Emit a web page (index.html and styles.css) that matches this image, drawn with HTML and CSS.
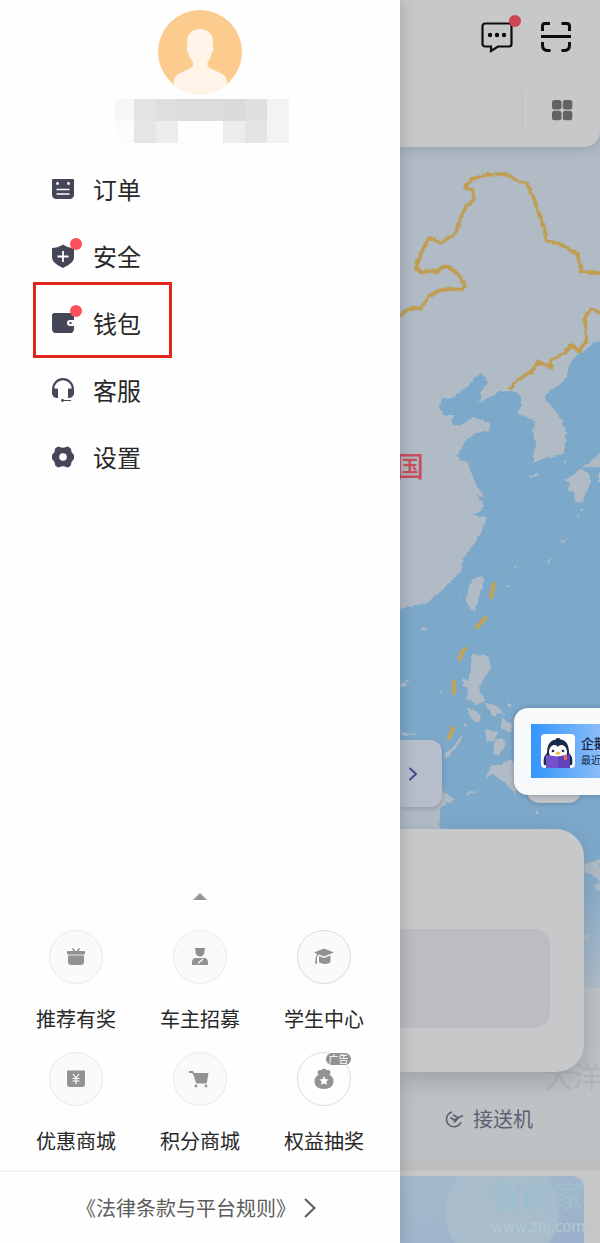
FILE: index.html
```html
<!DOCTYPE html>
<html lang="zh-CN">
<head>
<meta charset="utf-8">
<meta name="viewport" content="width=device-width, initial-scale=1">
<title>个人中心</title>
<link rel="stylesheet" href="styles.css">
</head>
<body>
<div class="screen">
  <aside class="drawer">
    <header class="profile">
      <svg class="avatar" viewBox="0 0 84 84" role="img" aria-label="头像">
        <defs><clipPath id="face"><circle cx="42" cy="42" r="42"/></clipPath></defs>
        <circle cx="42" cy="42" r="42" fill="#fccb8e"/>
        <path clip-path="url(#face)" fill="#fff4e7" d="M42 19c8 0 13 5 13 12l-.300 5c2 0 1 6-1.200 7-.5 4-2 7-4 9v4c5 5 15 6 18 11 2 4 2 9 2 17H16c0-8-1-14 1-17 3-5 13-6 18-11v-4c-3-3-4-6-4.500-9-2-1-3-7-1-7L29 31c0-7 5-12 13-12z"/>
      </svg>
      <svg class="mosaic" viewBox="0 0 174 44" shape-rendering="crispEdges" aria-hidden="true">
        <path fill="#f7f7f7" d="M0 0h19v22H0z"/><path fill="#fcfcfc" d="M0 22h19v22H0z"/>
        <path fill="#e3e3e3" d="M19 0h22v22H19z"/><path fill="#e5e5e5" d="M19 22h22v22H19z"/>
        <path fill="#dedede" d="M41 0h22v22H41z"/><path fill="#ececec" d="M41 22h22v22H41z"/>
        <path fill="#dcdcdc" d="M63 0h45v22H63z"/><path fill="#fefefe" d="M63 22h45v22H63z"/>
        <path fill="#dadada" d="M108 0h22v22h-22z"/><path fill="#ececec" d="M108 22h22v22h-22z"/>
        <path fill="#dfdfdf" d="M130 0h22v22h-22z"/><path fill="#e4e4e4" d="M130 22h22v22h-22z"/>
        <path fill="#f3f3f3" d="M152 0h22v44h-22z"/>
      </svg>
    </header>

    <nav class="menu">
      <a class="item" href="#orders">
        <svg class="icon" viewBox="0 0 24 24"><path fill="#454658" d="M2 2h20a1 1 0 0 1 1 1v15c0 2-2 4-4 4H5c-2 0-4-2-4-4V3a1 1 0 0 1 1-1z"/><circle cx="6.500" cy="6.500" r="1.400" fill="#fff"/><circle cx="17.500" cy="6.500" r="1.400" fill="#fff"/><path d="M5.500 12.500h13M5.500 17h13" stroke="#fff" stroke-width="1.500"/></svg>
        <span>订单</span>
      </a>
      <a class="item" href="#safety">
        <svg class="icon" viewBox="0 0 24 24"><path fill="#454658" d="M12 .500 14.500 2C17 3.300 20 3.800 23 4v9c0 5-5 8-11 11C6 21 1 18 1 13V4c3-.2 6-.7 8.500-2z"/><path d="M12 7v11M6.500 12.500h11" stroke="#fff" stroke-width="1.800"/></svg>
        <i class="dot"></i>
        <span>安全</span>
      </a>
      <a class="item marked" href="#wallet">
        <svg class="icon" viewBox="0 0 24 24"><path fill="#454658" d="M3 2h18a2 2 0 0 1 2 2v5h-4a3 3 0 0 0 0 6h4v2c0 3-1 5-4 5H5c-3 0-4-2-4-5V4c0-1 1-2 2-2z"/><circle cx="19.500" cy="12" r="1.200" fill="#454658"/></svg>
        <i class="dot"></i>
        <span>钱包</span>
      </a>
      <a class="item" href="#service">
        <svg class="icon" viewBox="0 0 24 24"><path d="M2.200 13v-2a9.800 9.800 0 0 1 19.600 0v2" fill="none" stroke="#454658" stroke-width="2.200"/><path fill="#454658" d="M1.500 10.500H6a1 1 0 0 1 1 1V20c-3.500 0-6-2-6-5v-3.500zM22.500 10.500H18a1 1 0 0 0-1 1V20c3.500 0 6-2 6-5v-3.500z"/><path d="M11 22.500h9" stroke="#454658"/><circle cx="11.500" cy="22.500" r="1.400" fill="#454658"/></svg>
        <span>客服</span>
      </a>
      <a class="item" href="#settings">
        <svg class="icon" viewBox="0 0 24 24"><path fill="#454658" stroke="#454658" stroke-width="3" stroke-linejoin="round" d="M7.500 3c3 1.700 6 1.700 9 0l2 1.200c0 3 1 5 3 6.300v3c-2 1.300-3 3.300-3 6l-2 1.500c-3-1.700-6-1.700-9 0l-2-1.500c0-2.700-1-4.700-3-6v-3c2-1.300 3-3.300 3-6.300z"/><circle cx="12" cy="12" r="3.800" fill="#fff"/></svg>
        <span>设置</span>
      </a>
    </nav>

    <section class="more">
      <button class="expand" aria-label="展开"><svg viewBox="0 0 14 7"><path fill="#969696" d="M0 7 7 0l7 7z"/></svg></button>
      <div class="tiles">
        <a class="tile" href="#refer">
          <span class="disc"><svg viewBox="0 0 20 20"><path fill="#929292" d="M1 4h18v3H1zM2 9h16v6c0 2-1 3-3 3H5c-2 0-3-1-3-3z"/><path fill="#bdbdbd" d="M2 7h16v2H2z"/><path d="m6.500 1.500 2 2.500M13.500 1.500l-2 2.500" stroke="#929292" stroke-width="1.600"/></svg></span>
          <span class="label">推荐有奖</span>
        </a>
        <a class="tile" href="#driver">
          <span class="disc"><svg viewBox="0 0 20 20"><path fill="#929292" d="M5 1h10v2h-.500v2a4.500 4.500 0 0 1-9 0V3H5zM6 11h8c3 0 4 2 4 5v2H2v-2c0-3 1-5 4-5z"/><path d="m13 12-5 4.500" stroke="#fafafa" stroke-width="1.400"/></svg></span>
          <span class="label">车主招募</span>
        </a>
        <a class="tile" href="#student">
          <span class="disc strong"><svg viewBox="0 0 20 20"><path fill="#929292" d="m10 1.500 10 4-10 4-5-2-2 2v7l-2 .500.800-7L3 7 0 5.500z"/><path fill="#929292" d="m5 9 5 2 6.500-2.500V15c-2 2.500-9 2.500-11.500 0z"/></svg></span>
          <span class="label">学生中心</span>
        </a>
        <a class="tile" href="#coupon">
          <span class="disc"><svg viewBox="0 0 20 20"><path fill="#929292" d="M1 1.500h18V15c0 2-1 3-3 3H4c-2 0-3-1-3-3z"/><path d="m7 5 3 4 3-4M6.500 9.500h7M6.500 12h7M10 9v6" fill="none" stroke="#fff" stroke-width="1.200"/></svg></span>
          <span class="label">优惠商城</span>
        </a>
        <a class="tile" href="#points">
          <span class="disc"><svg viewBox="0 0 20 20"><path d="M-1 3h3.500l2 3" fill="none" stroke="#929292" stroke-width="1.800"/><path fill="#929292" d="M3 4h15.500l-1.500 9c-.2 1-1 1.500-2 1.500H8c-1.500 0-2-.5-2.500-2z"/><circle cx="6" cy="17" r="1.400" fill="#929292"/><circle cx="16" cy="17" r="1.400" fill="#929292"/></svg></span>
          <span class="label">积分商城</span>
        </a>
        <a class="tile" href="#lottery">
          <span class="disc plain strong"><svg viewBox="0 0 20 20"><path fill="#929292" d="M4 1.500 7 1l3-1.500 3 1.500 3 .5.500 3-1.500 1c3 1.500 4.500 3.500 4.500 6.500 0 5-3.500 8-9.500 8S.5 17 .5 12C.5 9 2 7 5 5.500l-1.500-1z"/><path fill="#fff" d="m10 7 1.400 3 3.300.4-2.400 2.200.7 3.300-3-1.700-3 1.700.7-3.300-2.400-2.200 3.300-.4z"/></svg><small class="ad">广告</small></span>
          <span class="label">权益抽奖</span>
        </a>
      </div>
    </section>

    <footer class="legal">
      <a href="#terms">《法律条款与平台规则》<svg viewBox="0 0 12 20"><path d="m1 1 9.500 9L1 19" fill="none" stroke="#5c5c5c" stroke-width="2"/></svg></a>
    </footer>
  </aside>

  <main class="home">
    <svg class="map" viewBox="0 0 200 1243" preserveAspectRatio="xMinYMin slice" aria-hidden="true">
      <defs>
        <filter id="rough" x="0" y="0" width="100%" height="100%"><feTurbulence type="fractalNoise" baseFrequency=".22" numOctaves="2" seed="4"/><feDisplacementMap in="SourceGraphic" scale="4" xChannelSelector="R" yChannelSelector="G"/></filter>
        <linearGradient id="haze" x2="0" y2="1"><stop stop-color="#b5bfc8" stop-opacity="0"/><stop offset="1" stop-color="#b5bfc8" stop-opacity=".9"/></linearGradient>
      </defs>
      <path fill="#b1bbc5" d="M0 0h200v1243H0z"/>
      <g filter="url(#rough)">
        <path fill="none" d="M-10 0h230v1243H-10z"/>
        <path fill="#7ba8ca" d="M210 340 195 342 190 346 184 351 178 354 173 360 168 368 168 375 163 382 155 388 148 393 144 397 148 402 153 408 162 420 166 433 164 453 153 456 143 459 133 463 133 457 136 443 132 430 136 422 127 417 117 413 121 407 120 395 110 391 100 392 90 397 78 403 82 397 80 392 88 383 83 374 75 377 70 385 62 390 53 398 42 398 39 407 43 415 53 415 53 425 62 425 73 417 90 423 90 430 75 434 65 442 57 457 67 462 73 477 77 487 85 497 76 496 85 505 80 512 72 515 87 518 82 530 77 540 63 558 60 572 47 585 27 603 7 607-10 612V740L38 770 43 793 55 799 40 808 40 840V988H210z"/>
        <g fill="#b1bbc5">
          <path d="M80 576 84 577 81 592 74 613 66 602 67 592 72 581zM130 476l7-3 2 2-8 3zM163 460l3-1-1 6zM168 478l12-9 7 3 5 10-6 10-4 11-7-2-1-9-6-2 2-7-6-4zM182 468l22-19v19l-16-1zM198 474h6v8h-6zM176 514h3v2zM180 511l3-3v3zM160 543l7-6-4 6zM147 563l6-6-4 7zM155 552l3-2z"/>
          <path d="M71 653l8 2 9 1 3 12-8 12-4 6 3 9 3 6-8 4-10-6 1-10-5-3v-8l5 3 3-12zM67 709l9 2 5 7-3 5-6-4zM84 703l9 1 8 6 5 5-9-2-3 4-6-8zM85 729l13 3-3 8-8 2zM95 740l7-3 4 8-8 11-6-2zM86 776l5-10 10-2 9-5 9 8 2 18-6 9-9-10-9-7-7-3-2 6zM102 717l10 8-2 8-8-5zM108 702l4 5h-4zM42 757l15-14 4-9 1 4-4 7-10 12z"/>
          <path d="M64 725l3-2v4zM22 627l8 2-7 1zM0 685l10-6-5 8zM39 691l3-1v3zM101 569h3v2zM113 567h3v2zM105 586h5v2zM59 594h2v3zM75 646l9 1h-9zM0 732l18 2-13 2zM64 795l15-6-9 6zM136 808l3 7-3-1zM122 816l3 4zM180 421h2v1zM185 864l15-5v24l-8-9-8-1zM193 885l7-2v9zM184 936l9-3-8 9zM190 978l6-3v6z"/>
        </g>
      </g>
      <g filter="url(#rough)" fill="none" stroke-linejoin="round">
        <path d="M-10 0h230v1243H-10z"/>
        <path stroke="#baa571" stroke-width="4" d="M0 316 8 309 21 308 29 296 40 290 62 289 65 286 59 275 49 267 42 267 36 273 31 270 21 273 16 267 22 251 29 238 41 243 56 233 59 222 66 207 74 200 73 190 65 188 72 179 85 175 106 174 116 180 127 184 134 199 144 228 147 241 161 244 177 254 182 272 204 273M110 389 117 380 132 371 138 362 151 367 151 360 166 352 171 345 179 351 186 341 185 316 191 309 204 314"/>
        <path stroke="#c39c4c" stroke-width="2" d="M0 316 8 309 21 308 29 296 40 290 62 289 65 286 59 275 49 267 42 267 36 273 31 270 21 273 16 267 22 251 29 238 41 243 56 233 59 222 66 207 74 200 73 190 65 188 72 179 85 175 106 174 116 180 127 184 134 199 144 228 147 241 161 244 177 254 182 272 204 273M110 389 117 380 132 371 138 362 151 367 151 360 166 352 171 345 179 351 186 341 185 316 191 309 204 314"/>
      </g>
      <g fill="none" stroke-linecap="round">
        <path stroke="#b3a777" stroke-width="4.500" d="m94 584-3 13M85 618l-8 9M65 649q-5 5-5 10M54 682v11M53 728l-4 10"/>
        <path stroke="#cda04a" stroke-width="2" d="m94 584-3 13M85 618l-8 9M65 649q-5 5-5 10M54 682v11M53 728l-4 10"/>
      </g>
      <path fill="url(#haze)" d="M0 850h200v138H0z"/>
      <path fill="#bfc2c5" d="M0 988h200v255H0z"/>
    </svg>
    <span class="country">国</span>
    <span class="ocean">大洋</span>

    <header class="topbar">
      <div class="actions">
        <button class="action" aria-label="消息">
          <svg viewBox="0 0 32 32"><path d="M4 3.500h24a2.500 2.500 0 0 1 2.500 2.500v18a2.500 2.500 0 0 1-2.500 2.500H17L10 31v-4.500H4A2.500 2.500 0 0 1 1.500 24V6A2.500 2.500 0 0 1 4 3.500z" fill="none" stroke="#0c0c0c" stroke-width="2.200"/><g fill="#0c0c0c"><circle cx="9" cy="15" r="2.200"/><circle cx="16" cy="15" r="2.200"/><circle cx="23" cy="15" r="2.200"/></g></svg>
          <i class="badge"></i>
        </button>
        <button class="action" aria-label="扫一扫">
          <svg viewBox="0 0 32 32"><path d="M2.500 11V6c0-2 1-2.500 2.500-2.500h5M21.500 3.500h5c1.500 0 3 .5 3 2.500v5M2.500 22v3c0 4 2 5.500 5 5.500h3M29.500 22v3c0 4-2 5.500-5 5.500h-3" fill="none" stroke="#0c0c0c" stroke-width="3"/><path d="M1 16.500h30" stroke="#0c0c0c" stroke-width="3"/></svg>
        </button>
      </div>
      <div class="tools">
        <button class="grid" aria-label="全部服务"><svg viewBox="0 0 20 20" fill="#626365"><rect width="9.500" height="9.500" rx="2.500"/><rect x="10.800" width="9.500" height="9.500" rx="2.500"/><rect y="10.800" width="9.500" height="9.500" rx="2.500"/><rect x="10.800" y="10.800" width="9.500" height="9.500" rx="2.500"/></svg></button>
      </div>
    </header>

    <div class="view"></div>
    <button class="next" aria-label="下一步"><svg viewBox="0 0 10 14"><path d="m1.500 1 6.500 6-6.500 6" fill="none" stroke="#3b4784" stroke-width="1.800"/></svg></button>
    <section class="card"><div class="slot"></div></section>
    <section class="services">
      <a class="transfer" href="#airport">
        <svg viewBox="0 0 20 20"><path d="M7 3a7.500 7.500 0 1 0 9 10" fill="none" stroke="#5e5f70" stroke-width="1.600"/><path d="m5.500 8.500 3.500 2.500 9-4.500M8 6l5 2.500M12.500 10 9 13.500" fill="none" stroke="#5e5f70" stroke-width="1.700"/></svg>
        <span>接送机</span>
      </a>
    </section>
    <section class="feed">
      <div class="banner"></div>
      <div class="watermark"><b>智能家</b><span>www.znj.com</span></div>
    </section>

    <div class="locate"></div>
    <aside class="promo">
      <div class="promo-inner">
        <svg class="penguin" viewBox="0 0 34 34"><rect width="34" height="34" rx="4" fill="#fff"/><path fill="#172a49" d="M17 4.500c1-.8 2-.4 2 .8C25 6 28 11 28 19c3 3 4 6 3 12H3c-1-6 0-9 3-12C6 11 9 6 15 5.500c0-1 1-2 2-1z"/><path fill="#fff" d="M17 13c2-4 9-2 9 5 0 4-3 8-9 8s-9-4-9-8c0-7 7-9 9-5z"/><circle cx="12" cy="17" r="1.300" fill="#172a49"/><circle cx="22" cy="17" r="1.300" fill="#172a49"/><path fill="#f9b82c" d="m14 19 3-1.200 3 1.200-3 2z"/><path fill="#7251cb" d="M4.500 21 17 22.500 29 20.500V34H5z"/><path fill="#6042b9" d="m17 22.500 12-2V34H17z"/><path fill="#ef6b51" d="M23 21.500h3v5l-1.500-1-1.500 1z"/></svg>
        <p class="promo-text"><b>企鹅</b><span>最近</span></p>
      </div>
    </aside>
  </main>
</div>
</body>
</html>
```
FILE: styles.css
```css
*,
*::after {
  box-sizing: border-box;
}

body {
  margin: 0;
  font-family: "Noto Sans CJK SC", "Noto Sans", sans-serif;
  color: #282828;
  background: #fff;
}

a {
  color: inherit;
  text-decoration: none;
}

button {
  padding: 0;
  border: 0;
  background: none;
}

svg {
  display: block;
  overflow: visible;
}

.screen {
  display: grid;
  grid-template-columns: 2fr 1fr;
  min-height: 100vh;
  overflow: hidden;
}

/* Drawer */
.drawer {
  position: relative;
  z-index: 1;
  display: flex;
  flex-direction: column;
  background: #fefefe;
  box-shadow: 0 0 16px rgba(0, 0, 0, 0.2);
}

.profile {
  display: flex;
  flex-direction: column;
  align-items: center;
  gap: 5px;
  padding-top: 10px;
}

.avatar {
  width: 84px;
  height: 84px;
}

.mosaic {
  width: 174px;
  height: 44px;
  margin-left: 4px;
}

.menu {
  padding-top: 12px;
}

.item {
  position: relative;
  display: flex;
  align-items: center;
  gap: 18px;
  height: 67px;
  padding-left: 51px;
  font-size: 24px;
  line-height: 36px;
}

.icon {
  width: 24px;
  height: 24px;
}

.dot {
  position: absolute;
  left: 70px;
  top: 16px;
  width: 12px;
  height: 12px;
  border-radius: 50%;
  background: #fd4f5b;
}

.marked::after {
  content: "";
  position: absolute;
  left: 33px;
  top: -7px;
  width: 139px;
  height: 76px;
  border: 3px solid #e1261c;
}

.more {
  margin-top: auto;
  padding: 0 14px 15px;
}

.expand {
  display: block;
  width: 14px;
  margin: 0 auto 30px;
}

.tiles {
  display: grid;
  grid-template-columns: repeat(3, 1fr);
  row-gap: 19px;
}

.tile {
  display: flex;
  flex-direction: column;
  align-items: center;
  gap: 21px;
}

.disc {
  position: relative;
  display: grid;
  place-items: center;
  width: 54px;
  height: 54px;
  border: 1px solid #e9e9e9;
  border-radius: 50%;
  background: #fafafa;
}

.disc svg {
  width: 20px;
  height: 20px;
}

.strong {
  border-color: #dcdcdc;
}

.plain {
  background: #fefefe;
}

.ad {
  position: absolute;
  top: 0;
  right: -1px;
  width: 25px;
  border-radius: 6px;
  background: #929292;
  color: #fff;
  font-size: 10px;
  line-height: 12px;
  text-align: center;
}

.label {
  font-size: 20px;
  line-height: 28px;
  white-space: nowrap;
}

.legal {
  display: flex;
  justify-content: center;
  align-items: center;
  height: 73px;
  padding-right: 8px;
  border-top: 2px solid #f3f3f3;
  color: #5c5c5c;
  font-size: 20px;
  line-height: 30px;
}

.legal a {
  display: flex;
  align-items: center;
  gap: 8px;
}

.legal svg {
  width: 12px;
  height: 20px;
}

/* Dimmed home page */
.home {
  position: relative;
  display: flex;
  flex-direction: column;
  background: #bdc0c4;
}

.map {
  position: absolute;
  inset: 0;
  width: 100%;
  height: 100%;
}

.country,
.ocean {
  position: absolute;
  white-space: nowrap;
}

.country {
  top: 447px;
  left: -4px;
  color: #c84f5c;
  font-size: 28px;
  font-weight: 500;
  line-height: 36px;
}

.ocean {
  top: 1055px;
  left: 144px;
  color: #b2b5b8;
  font-size: 29px;
  line-height: 40px;
}

.topbar {
  position: relative;
  height: 147px;
  padding: 20px 28px 0 0;
  border-radius: 0 0 16px 0;
  background: #c7c8ca;
  box-shadow: 0 2px 12px rgba(70, 90, 130, 0.25);
}

.actions {
  display: flex;
  justify-content: flex-end;
  gap: 27px;
}

.action {
  position: relative;
}

.action svg {
  width: 32px;
  height: 32px;
}

.badge {
  position: absolute;
  top: -5px;
  right: -8px;
  width: 12px;
  height: 12px;
  border-radius: 50%;
  background: #cd4653;
}

.tools {
  display: flex;
  justify-content: flex-end;
  margin-top: 39px;
}

.grid {
  height: 38px;
  padding-left: 29px;
  border-left: 2px solid #c1c2c4;
}

.grid svg {
  width: 20px;
  height: 20px;
}

.view {
  flex: 1;
}

.next {
  position: relative;
  width: 42px;
  height: 67px;
  margin-bottom: 22px;
  padding-left: 8px;
  border-radius: 0 12px 12px 0;
  background: #b7bdca;
  box-shadow: 1px 2px 5px rgba(70, 80, 110, 0.25);
}

.next svg {
  width: 10px;
  height: 14px;
}

.card {
  position: relative;
  margin-right: 16px;
  padding: 100px 34px 44px 0;
  border-radius: 0 28px 28px 0;
  background: #c7c8ca;
  box-shadow: 0 8px 22px rgba(90, 100, 115, 0.35);
}

.slot {
  height: 99px;
  border-radius: 0 16px 16px 0;
  background: #bcbdc1;
}

.services {
  display: flex;
  align-items: center;
  height: 89px;
  padding: 5px 0 0 45px;
  background: linear-gradient(rgba(196, 198, 200, 0), #c4c6c8 40px);
}

.transfer {
  position: relative;
  display: flex;
  align-items: center;
  gap: 8px;
  color: #5e5f70;
  font-size: 20px;
  line-height: 30px;
}

.transfer svg {
  width: 20px;
  height: 20px;
}

.feed {
  position: relative;
  height: 82px;
  padding: 6px 16px 0 0;
  border-top: 9px solid #bcbdbf;
  background: #c4c6c8;
}

.banner {
  height: 67px;
  border-radius: 0 12px 0 0;
  background: radial-gradient(circle at 102px 36px, #a9bccb 56px, transparent 57px), linear-gradient(160deg, #a5bbcb, #9bb1cc);
}

.watermark {
  position: absolute;
  top: 2px;
  left: 91px;
  color: #9dbecb;
  white-space: nowrap;
}

.watermark b,
.watermark span {
  display: block;
}

.watermark b {
  font-size: 31px;
  font-weight: 500;
  line-height: 44px;
}

.watermark span {
  color: #b3c9d3;
  font-size: 15px;
  line-height: 20px;
}

.locate {
  position: absolute;
  top: 750px;
  left: 126px;
  width: 56px;
  height: 53px;
  border-radius: 14px;
  background: #bfc2c5;
  box-shadow: 0 1px 4px rgba(60, 70, 90, 0.3);
}

.promo {
  position: absolute;
  top: 708px;
  left: 114px;
  right: -40px;
  padding: 16px 0 17px 17px;
  border-radius: 14px;
  background: #f8f9fa;
  box-shadow: 0 0 5px rgba(40, 60, 90, 0.4);
}

.promo-inner {
  display: flex;
  align-items: center;
  gap: 6px;
  height: 54px;
  padding-left: 10px;
  background: linear-gradient(90deg, #3395fb, #8bbdf8 70px);
}

.penguin {
  flex: none;
  width: 34px;
  height: 34px;
}

.promo-text {
  margin: 0;
  color: #13233f;
  white-space: nowrap;
}

.promo-text b,
.promo-text span {
  display: block;
}

.promo-text b {
  font-size: 13px;
  font-weight: 500;
  line-height: 18px;
}

.promo-text span {
  font-size: 10px;
  line-height: 16px;
}
```
